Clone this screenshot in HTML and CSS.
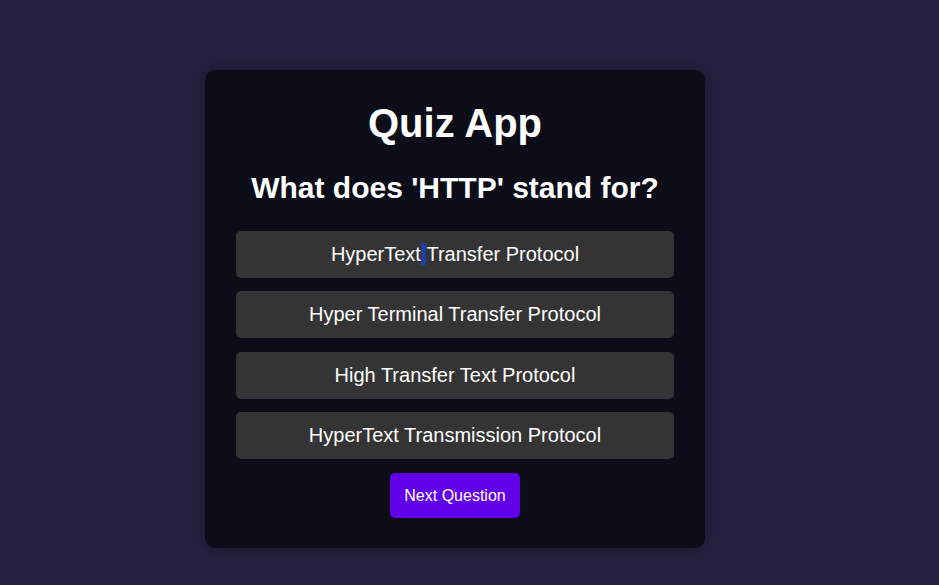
FILE: index.html
```html
<!DOCTYPE html>
<html>
<head>
<meta charset="utf-8">
<link rel="stylesheet" href="styles.css">
</head>
<body>
<div class="card">
  <h1 class="title">Quiz App</h1>
  <h2 class="question">What does 'HTTP' stand for?</h2>
  <div class="options">
    <button class="option">HyperText<span class="sel">&nbsp;</span>Transfer Protocol</button>
    <button class="option">Hyper Terminal Transfer Protocol</button>
    <button class="option">High Transfer Text Protocol</button>
    <button class="option">HyperText Transmission Protocol</button>
  </div>
  <button class="next">Next Question</button>
</div>
</body>
</html>
```
FILE: styles.css
```css
html, body {
  margin: 0;
  padding: 0;
}
body {
  background: #22213f;
  font-family: "Liberation Sans", Arial, sans-serif;
  color: #ffffff;
  width: 939px;
  height: 585px;
  display: flex;
  justify-content: flex-start;
  align-items: flex-start;
}
.card {
  margin-top: 70px;
  margin-left: 205px;
  width: 500px;
  box-sizing: border-box;
  background: #0d0d19;
  border-radius: 10px;
  padding: 29px 31px 30px;
  box-shadow: 0 0 20px rgba(0, 0, 0, 0.25);
  display: flex;
  flex-direction: column;
  align-items: center;
}
.title {
  margin: 0;
  font-size: 40px;
  font-weight: bold;
  line-height: 48px;
}
.question {
  margin: 23px 0 0;
  font-size: 30px;
  font-weight: bold;
  line-height: 35px;
}
.options {
  margin-top: 26px;
  width: 100%;
  display: flex;
  flex-direction: column;
  gap: 13.3px;
}
.option {
  display: block;
  width: 100%;
  background: #343434;
  color: #ffffff;
  border: none;
  border-radius: 5px;
  font-family: "Liberation Sans", Arial, sans-serif;
  font-size: 20px;
  line-height: 23px;
  padding: 12px 10px;
  text-align: center;
}
.sel {
  background: #1b3fa3;
}
.next {
  margin-top: 14px;
  background: #6200ea;
  color: #ffffff;
  border: none;
  border-radius: 5px;
  font-family: "Liberation Sans", Arial, sans-serif;
  font-size: 16px;
  line-height: 21px;
  padding: 12px 14.5px;
}
```
